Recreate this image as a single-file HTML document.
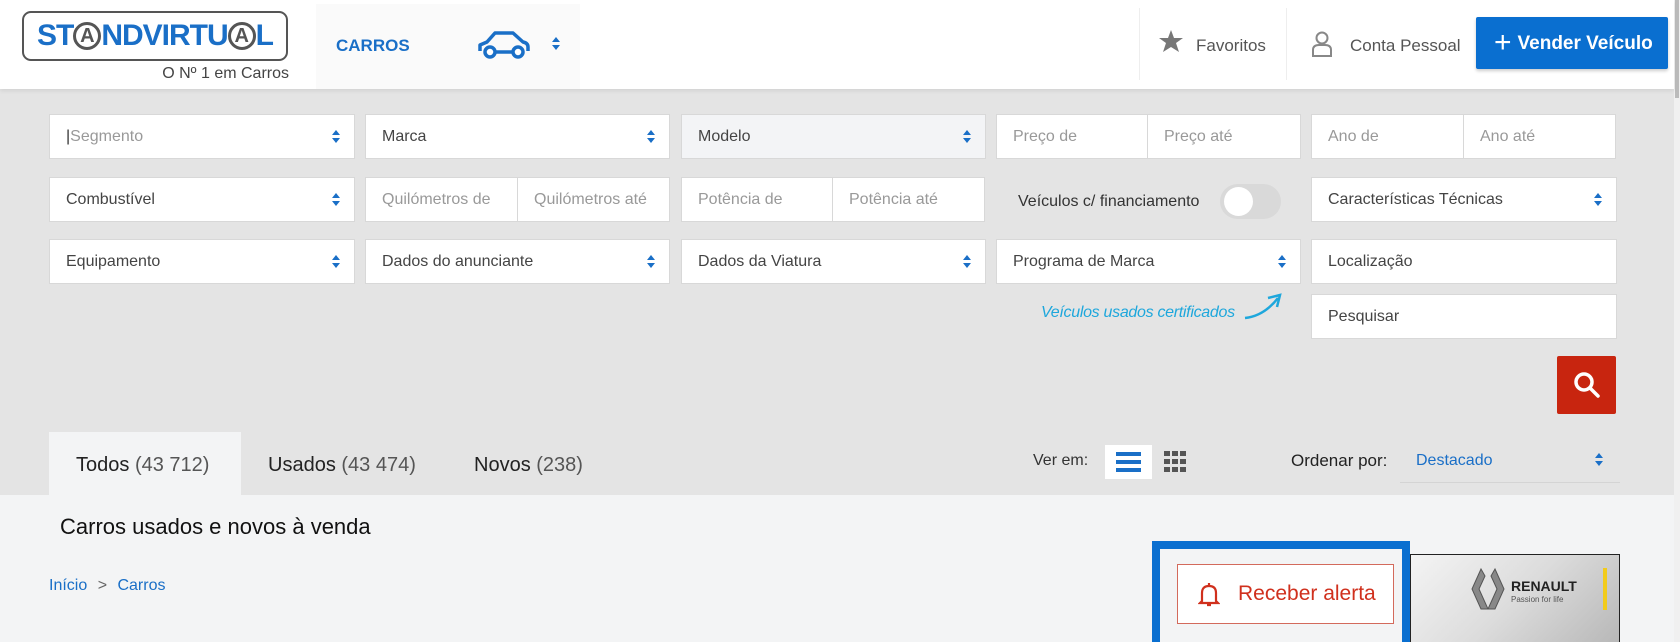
<!DOCTYPE html>
<html><head><meta charset="utf-8"><style>
*{box-sizing:border-box;margin:0;padding:0}
body{width:1680px;height:642px;overflow:hidden;background:#f3f4f5;font-family:"Liberation Sans",sans-serif;position:relative;color:#333}
.a{position:absolute}
.hdr{left:0;top:0;width:1674px;height:89px;background:#fff;box-shadow:0 2px 4px rgba(0,0,0,.08);z-index:2}
.gray{left:0;top:89px;width:1674px;height:406px;background:#e4e4e4}
.in{position:absolute;background:#fff;border:1px solid #d8d8d8;height:45px;font-size:16px;color:#999;padding:0 16px;line-height:43px}
.in.dk{color:#444}
.ar{position:absolute;right:14px;top:15px;width:8px;height:13px}
.ar:before{content:"";position:absolute;left:0;top:0;border-left:4px solid transparent;border-right:4px solid transparent;border-bottom:5px solid #1a6fc7}
.ar:after{content:"";position:absolute;left:0;bottom:0;border-left:4px solid transparent;border-right:4px solid transparent;border-top:5px solid #1a6fc7}
.sb{position:absolute;right:0;top:0;width:6px;height:642px;background:#f0f0f0}
</style></head><body>
<div class="a gray"></div>
<div class="a hdr">
  <div class="a" style="left:22px;top:11px;width:266px;height:50px;border:2px solid #555;border-radius:9px;font-weight:bold;font-size:30px;color:#1a6fc7;line-height:46px;text-align:center;letter-spacing:-1px">ST<span style="display:inline-block;width:28px;height:28px;border:3px solid #555;border-radius:50%;color:#555;font-size:20px;line-height:22px;vertical-align:3px;letter-spacing:0">A</span>NDVIRTU<span style="display:inline-block;width:28px;height:28px;border:3px solid #555;border-radius:50%;color:#555;font-size:20px;line-height:22px;vertical-align:3px;letter-spacing:0">A</span>L</div>
  <div class="a" style="left:150px;top:65px;width:139px;text-align:right;font-size:16px;color:#444">O Nº 1 em Carros</div>
  <div class="a" style="left:316px;top:4px;width:264px;height:85px;background:#fafafa"></div>
  <div class="a" style="left:336px;top:36px;font-size:17px;font-weight:bold;color:#1a6fc7">CARROS</div>
  <svg class="a" style="left:477px;top:29px" width="54" height="32" viewBox="0 0 54 32"><path d="M3 22 V16 L10 13 L18 4 H36 L46 13 Q51 14 51 18 V22" fill="none" stroke="#1a6fc7" stroke-width="3.5" stroke-linejoin="round"/><circle cx="13" cy="23" r="5" fill="#fff" stroke="#1a6fc7" stroke-width="3.5"/><circle cx="41" cy="23" r="5" fill="#fff" stroke="#1a6fc7" stroke-width="3.5"/><path d="M18 23 H36" stroke="#1a6fc7" stroke-width="3.5"/></svg>
  <div class="ar" style="left:552px;top:37px"></div>
  <div class="a" style="left:1139px;top:8px;width:1px;height:72px;background:#eee"></div>
  <svg class="a" style="left:1159px;top:30px" width="24" height="23" viewBox="0 0 24 23"><path d="M12 0 L15 8 H24 L17 13 L20 22 L12 17 L4 22 L7 13 L0 8 H9 Z" fill="#777"/></svg>
  <div class="a" style="left:1196px;top:36px;font-size:17px;color:#555">Favoritos</div>
  <div class="a" style="left:1286px;top:8px;width:1px;height:72px;background:#eee"></div>
  <svg class="a" style="left:1311px;top:31px" width="22" height="26" viewBox="0 0 22 26"><circle cx="11" cy="7" r="5.5" fill="none" stroke="#888" stroke-width="2"/><path d="M2 25 V19 Q2 14 8 14 H14 Q20 14 20 19 V25 Z" fill="none" stroke="#888" stroke-width="2"/></svg>
  <div class="a" style="left:1350px;top:36px;font-size:17px;color:#555">Conta Pessoal</div>
  <div class="a" style="left:1476px;top:17px;width:192px;height:52px;background:#0a6fd0;border-radius:2px;color:#fff;font-weight:bold;font-size:19px;line-height:52px;padding-left:18px;box-shadow:0 2px 3px rgba(0,0,0,.2)"><span style="font-size:30px;font-weight:normal;vertical-align:-3px;margin-right:6px">+</span>Vender Veículo</div>
</div>

<div class="in" style="left:49px;top:114px;width:306px"><span style="color:#333">|</span>Segmento<div class="ar"></div></div>
<div class="in dk" style="left:365px;top:114px;width:305px">Marca<div class="ar"></div></div>
<div class="in dk" style="left:681px;top:114px;width:305px;background:#f3f4f6">Modelo<div class="ar"></div></div>
<div class="in" style="left:996px;top:114px;width:152px">Preço de</div>
<div class="in" style="left:1147px;top:114px;width:154px">Preço até</div>
<div class="in" style="left:1311px;top:114px;width:153px">Ano de</div>
<div class="in" style="left:1463px;top:114px;width:153px">Ano até</div>

<div class="in dk" style="left:49px;top:177px;width:306px">Combustível<div class="ar"></div></div>
<div class="in" style="left:365px;top:177px;width:153px">Quilómetros de</div>
<div class="in" style="left:517px;top:177px;width:153px">Quilómetros até</div>
<div class="in" style="left:681px;top:177px;width:152px">Potência de</div>
<div class="in" style="left:832px;top:177px;width:153px">Potência até</div>
<div class="a" style="left:1018px;top:193px;font-size:16px;color:#333">Veículos c/ financiamento</div>
<div class="a" style="left:1220px;top:184px;width:61px;height:35px;border-radius:18px;background:#d9d9d9"><div class="a" style="left:4px;top:3px;width:29px;height:29px;border-radius:50%;background:#fff"></div></div>
<div class="in dk" style="left:1311px;top:177px;width:306px">Características Técnicas<div class="ar"></div></div>

<div class="in dk" style="left:49px;top:239px;width:306px">Equipamento<div class="ar"></div></div>
<div class="in dk" style="left:365px;top:239px;width:305px">Dados do anunciante<div class="ar"></div></div>
<div class="in dk" style="left:681px;top:239px;width:305px">Dados da Viatura<div class="ar"></div></div>
<div class="in dk" style="left:996px;top:239px;width:305px">Programa de Marca<div class="ar"></div></div>
<div class="in dk" style="left:1311px;top:239px;width:306px">Localização</div>
<div class="in dk" style="left:1311px;top:294px;width:306px">Pesquisar</div>
<div class="a" style="left:1041px;top:304px;font-size:16px;color:#1ea7dc;font-style:italic;letter-spacing:-0.3px">Veículos usados certificados</div>
<svg class="a" style="left:1242px;top:292px" width="42" height="30" viewBox="0 0 42 30"><path d="M3 26 Q22 24 36 6" fill="none" stroke="#1ea7dc" stroke-width="2.5"/><path d="M26 6 L38 3 L35 15" fill="none" stroke="#1ea7dc" stroke-width="2.5"/></svg>
<div class="a" style="left:1557px;top:356px;width:59px;height:58px;background:#c8250f;border-radius:2px"><svg class="a" style="left:16px;top:15px" width="28" height="28" viewBox="0 0 28 28"><circle cx="11" cy="11" r="8" fill="none" stroke="#fff" stroke-width="3.5"/><path d="M17 17 L25 25" stroke="#fff" stroke-width="3.5" stroke-linecap="round"/></svg></div>

<div class="a" style="left:49px;top:432px;width:192px;height:63px;background:#f3f4f5"></div>
<div class="a" style="left:76px;top:454px;font-size:20px;color:#222">Todos <span style="color:#555">(43 712)</span></div>
<div class="a" style="left:268px;top:454px;font-size:20px;color:#222">Usados <span style="color:#555">(43 474)</span></div>
<div class="a" style="left:474px;top:454px;font-size:20px;color:#222">Novos <span style="color:#555">(238)</span></div>
<div class="a" style="left:1033px;top:452px;font-size:16px;color:#333">Ver em:</div>
<div class="a" style="left:1105px;top:445px;width:47px;height:34px;background:#fff"><div class="a" style="left:11px;top:7px;width:25px;height:4px;background:#1a6fc7"></div><div class="a" style="left:11px;top:15px;width:25px;height:4px;background:#1a6fc7"></div><div class="a" style="left:11px;top:23px;width:25px;height:4px;background:#1a6fc7"></div></div>
<svg class="a" style="left:1164px;top:451px" width="22" height="22" viewBox="0 0 22 22" fill="#555"><rect x="0" y="0" width="6" height="5"/><rect x="8" y="0" width="6" height="5"/><rect x="16" y="0" width="6" height="5"/><rect x="0" y="8" width="6" height="5"/><rect x="8" y="8" width="6" height="5"/><rect x="16" y="8" width="6" height="5"/><rect x="0" y="16" width="6" height="5"/><rect x="8" y="16" width="6" height="5"/><rect x="16" y="16" width="6" height="5"/></svg>
<div class="a" style="left:1291px;top:451px;font-size:17px;color:#222">Ordenar por:</div>
<div class="a" style="left:1416px;top:452px;font-size:16px;color:#1a6fc7">Destacado</div>
<div class="ar" style="left:1595px;top:453px;right:auto"></div>
<div class="a" style="left:1400px;top:482px;width:220px;height:1px;background:#d4d4d4"></div>

<div class="a" style="left:60px;top:514px;font-size:22px;color:#111">Carros usados e novos à venda</div>
<div class="a" style="left:49px;top:577px;font-size:16px;color:#1a6fc7">Início <span style="color:#666;margin:0 6px">&gt;</span> Carros</div>

<div class="a" style="left:1410px;top:554px;width:210px;height:88px;border:1px solid #222;border-bottom:none;background:linear-gradient(135deg,#f4f4f4,#dcdcdc 50%,#b8b8b8)">
  <svg class="a" style="left:60px;top:12px" width="34" height="44" viewBox="0 0 34 44"><path d="M10 2 L1 22 L10 42 H17 L8 22 L14 9 Z M24 2 L33 22 L24 42 H17 L26 22 L20 9 Z" fill="#888" stroke="#555"/></svg>
  <div class="a" style="left:100px;top:23px;font-size:14px;font-weight:bold;color:#222">RENAULT</div>
  <div class="a" style="left:100px;top:40px;font-size:8px;color:#555">Passion for life</div>
  <div class="a" style="left:192px;top:13px;width:4px;height:42px;background:#f2cb1b"></div>
</div>
<div class="a" style="left:1152px;top:541px;width:258px;height:101px;border:8px solid #0a6fd0;border-bottom:none;background:#f3f4f5"></div>
<div class="a" style="left:1177px;top:564px;width:217px;height:60px;border:1px solid #d36a5c;background:#fff;color:#d0301d;font-size:21px;line-height:58px;padding-left:60px">Receber alerta
  <svg class="a" style="left:20px;top:17px" width="22" height="26" viewBox="0 0 22 26"><path d="M4 19 V11 Q4 4 11 4 Q18 4 18 11 V19 L20 21 H2 Z" fill="none" stroke="#d0301d" stroke-width="2.2"/><path d="M11 1 V4 M9 23 H13" stroke="#d0301d" stroke-width="2.2"/></svg>
</div>
<div class="sb"><div class="a" style="left:1px;top:0;width:4px;height:98px;background:#bbb"></div></div>
</body></html>
